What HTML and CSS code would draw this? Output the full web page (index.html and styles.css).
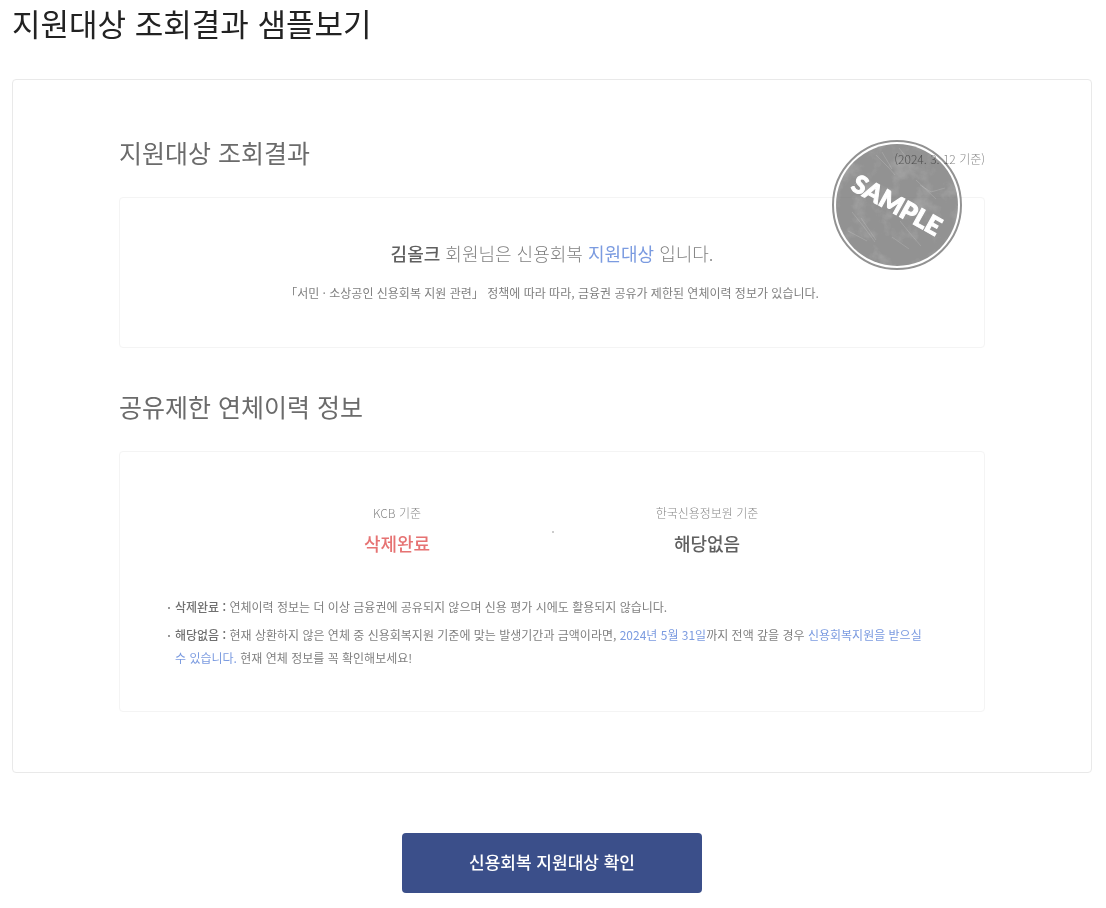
FILE: index.html
```html
<!DOCTYPE html>
<html lang="ko">
<head>
<meta charset="utf-8">
<meta name="viewport" content="width=device-width, initial-scale=1">
<title>지원대상 조회결과 샘플보기</title>
<link rel="stylesheet" href="styles.css">
</head>
<body>
<main class="page">
  <h1 class="page-title">지원대상 조회결과 샘플보기</h1>
  <div class="sample">
    <section class="section">
      <header class="section-head">
        <h2 class="section-title">지원대상 조회결과</h2>
        <span class="date">(2024. 3. 12 기준)</span>
      </header>
      <div class="box result">
        <p class="result-main"><strong>김올크</strong> 회원님은 신용회복 <em>지원대상</em> 입니다.</p>
        <p class="result-sub">「서민 · 소상공인 신용회복 지원 관련」 정책에 따라 따라, 금융권 공유가 제한된 연체이력 정보가 있습니다.</p>
      </div>
      <svg class="stamp" viewBox="0 0 130 130" role="img" aria-label="SAMPLE">
        <defs>
          <filter id="grain" x="0" y="0" width="100%" height="100%">
            <feTurbulence type="fractalNoise" baseFrequency="0.05 0.05" numOctaves="5" seed="3"/>
            <feColorMatrix values="0 0 0 0 1  0 0 0 0 1  0 0 0 0 1  2.2 0 0 0 -1.05"/>
          </filter>
          <clipPath id="disc"><circle cx="65" cy="65" r="61"/></clipPath>
        </defs>
        <circle class="stamp-ring" cx="65" cy="65" r="64"/>
        <circle class="stamp-disc" cx="65" cy="65" r="61"/>
        <g clip-path="url(#disc)">
          <rect width="130" height="130" filter="url(#grain)" opacity=".2"/>
          <g class="stamp-scratches">
            <path d="M44 15l13 13 6 7M50 12l10 17M67 8l11 14M20 72l12 15 11 15M29 78l15 22M16 91l19 10M68 81l8 10 13 15M60 97l17 12M88 45l11 7 14-4M84 40l20 19M22 45l8-7"/>
          </g>
        </g>
        <text class="stamp-text" x="65" y="74" text-anchor="middle" transform="rotate(29 65 65)">SAMPLE</text>
      </svg>
    </section>
    <section class="section">
      <header class="section-head">
        <h2 class="section-title">공유제한 연체이력 정보</h2>
      </header>
      <div class="box history">
        <dl class="stats">
          <div class="stat">
            <dt>KCB 기준</dt>
            <dd class="deleted">삭제완료</dd>
          </div>
          <div class="stat">
            <dt>한국신용정보원 기준</dt>
            <dd>해당없음</dd>
          </div>
        </dl>
        <ul class="notes">
          <li><strong>삭제완료 :</strong> 연체이력 정보는 더 이상 금융권에 공유되지 않으며 신용 평가 시에도 활용되지 않습니다.</li>
          <li><strong>해당없음 :</strong> 현재 상환하지 않은 연체 중 신용회복지원 기준에 맞는 발생기간과 금액이라면, <em>2024년 5월 31일</em>까지 전액 갚을 경우 <em>신용회복지원을 받으실 수 있습니다.</em> 현재 연체 정보를 꼭 확인해보세요!</li>
        </ul>
      </div>
    </section>
  </div>
  <button class="confirm" type="button">신용회복 지원대상 확인</button>
</main>
</body>
</html>
```
FILE: styles.css
```css
* { box-sizing: border-box; }
body, h1, h2, p, dl, dd, ul { margin: 0; }
body {
  background: #fff;
  color: #222;
  font-family: "Noto Sans CJK KR", "Noto Sans", sans-serif;
  word-break: keep-all;
}
em { font-style: normal; color: #7b9be0; }
.page {
  display: flex;
  flex-direction: column;
  padding: 0 14px 15px 12px;
}
.page-title {
  font-size: 31px;
  font-weight: 400;
  line-height: 46px;
  margin-bottom: 33px;
}
.sample {
  display: grid;
  gap: 36px;
  padding: 50px 106px 60px;
  border: 1px solid #e9e9e9;
  border-radius: 4px;
  color: #808080;
}
.section { position: relative; }
.section-head {
  display: flex;
  align-items: center;
  justify-content: space-between;
  height: 44px;
  margin-bottom: 23px;
}
.section-title {
  color: #6b6b6b;
  font-size: 25px;
  font-weight: 400;
}
.date {
  position: relative;
  z-index: 1;
  mix-blend-mode: multiply;
  color: #888;
  font-size: 12px;
  font-weight: 300;
  padding-top: 12px;
}
.box {
  border: 1px solid #f4f4f4;
  border-radius: 4px;
}
.result {
  padding: 39px 20px 43px;
  text-align: center;
}
.result-main {
  font-size: 18px;
  font-weight: 300;
  line-height: 32px;
  margin-bottom: 12px;
}
.result-main strong { color: #606060; font-weight: 500; }
.result-main em { font-weight: 400; }
.result-sub {
  font-size: 12px;
  line-height: 23px;
}
.stamp {
  position: absolute;
  top: 10px;
  right: 23px;
  width: 130px;
  height: 130px;
  opacity: .8;
}
.stamp-ring { fill: #fff; stroke: #777; stroke-width: 2; }
.stamp-disc { fill: #777; }
.stamp-scratches { fill: none; stroke: #fff; stroke-width: 1; opacity: .15; }
.stamp-text {
  fill: #fff;
  stroke: #fff;
  stroke-width: 1;
  font-family: Lato, "Liberation Sans", sans-serif;
  font-size: 25px;
  font-weight: 900;
}
.history { padding: 49px 48px 42px; }
.stats {
  position: relative;
  display: grid;
  grid-template-columns: 1fr 1fr;
  max-width: 620px;
  margin: 0 auto 34px;
  text-align: center;
}
.stats::after {
  content: "";
  position: absolute;
  left: 50%;
  top: 50%;
  width: 2px;
  height: 2px;
  background: #ccc;
}
.stat dt {
  color: #888;
  font-size: 12px;
  font-weight: 300;
  line-height: 24px;
}
.stat dd {
  color: #606060;
  font-size: 18px;
  font-weight: 500;
  line-height: 36px;
}
.stat .deleted { color: #e67373; }
.notes {
  display: grid;
  gap: 5px;
  padding: 0;
  list-style: none;
  font-size: 12px;
  line-height: 23px;
}
.notes li { position: relative; padding-left: 7px; }
.notes li::before {
  content: "";
  position: absolute;
  left: 0;
  top: 12px;
  width: 2px;
  height: 2px;
  background: #999;
}
.notes strong { color: #707070; font-weight: 500; }
.confirm {
  align-self: center;
  width: 300px;
  height: 60px;
  margin-top: 60px;
  padding: 0 0 4px;
  border: 0;
  border-radius: 4px;
  background: #3b4f8a;
  color: #fff;
  font: 500 17px "Noto Sans CJK KR", "Noto Sans", sans-serif;
}
```
